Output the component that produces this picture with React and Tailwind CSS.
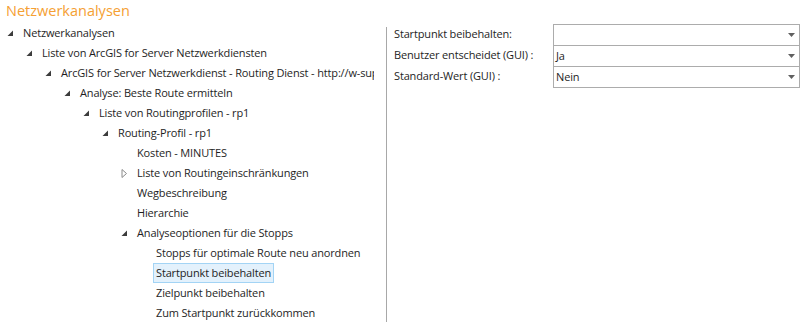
import React from 'react';

const FONT = { fontFamily: '"Open Sans", "Noto Sans", sans-serif' };

const tree = [
    { level: 0, label: 'Netzwerkanalysen', icon: 'open' },
    { level: 1, label: 'Liste von ArcGIS for Server Netzwerkdiensten', icon: 'open' },
    { level: 2, label: 'ArcGIS for Server Netzwerkdienst - Routing Dienst - http://w-sup.example.de/arcgis/rest/services', icon: 'open' },
    { level: 3, label: 'Analyse: Beste Route ermitteln', icon: 'open' },
    { level: 4, label: 'Liste von Routingprofilen - rp1', icon: 'open' },
    { level: 5, label: 'Routing-Profil - rp1', icon: 'open' },
    { level: 6, label: 'Kosten - MINUTES' },
    { level: 6, label: 'Liste von Routingeinschränkungen', icon: 'closed' },
    { level: 6, label: 'Wegbeschreibung' },
    { level: 6, label: 'Hierarchie' },
    { level: 6, label: 'Analyseoptionen für die Stopps', icon: 'open' },
    { level: 7, label: 'Stopps für optimale Route neu anordnen' },
    { level: 7, label: 'Startpunkt beibehalten', selected: true },
    { level: 7, label: 'Zielpunkt beibehalten' },
    { level: 7, label: 'Zum Startpunkt zurückkommen' },
];

// Einrückung pro Ebene: 19px
const indent = ['pl-[4px]', 'pl-[23px]', 'pl-[42px]', 'pl-[61px]', 'pl-[80px]', 'pl-[99px]', 'pl-[118px]', 'pl-[137px]'];

function Arrow({ type }) {
    if (type === 'open') {
        return (
            <svg width="7" height="7" viewBox="0 0 7 7" className="ml-[3px]">
                <polygon points="6,0.5 6,6 0.5,6" fill="#3c3c3c" />
            </svg>
        );
    }
    if (type === 'closed') {
        return (
            <svg width="7" height="9" viewBox="0 0 7 9" className="ml-[3px]">
                <polygon points="1,0.5 5.5,4.5 1,8.5" fill="none" stroke="#8a8a8a" strokeWidth="1" />
            </svg>
        );
    }
    return null;
}

function Dropdown({ value }) {
    return (
        <div className="h-[22px] border border-[#acacac] -mt-px first:mt-0 flex items-center justify-between pl-[2px] pr-[4px] bg-white">
            <span>{value}</span>
            <svg width="7" height="4" viewBox="0 0 7 4">
                <polygon points="0,0 7,0 3.5,4" fill="#606060" />
            </svg>
        </div>
    );
}

export default function App() {
    return (
        <div className="w-[802px] h-[330px] bg-white overflow-hidden text-[#1e1e1e] text-[11px] tracking-[-0.15px]" style={FONT}>
            <div className="h-[23px] pl-[6px] flex items-center text-[14.5px] tracking-normal leading-none text-[#f5a033]">
                Netzwerkanalysen
            </div>
            <div className="flex">
                <div className="w-[374px] overflow-hidden">
                    {tree.map((item, i) => (
                        <div key={i} className={`h-[20px] flex items-center whitespace-nowrap ${indent[item.level]}`}>
                            <span className="w-[19px] shrink-0 flex items-center">
                                <Arrow type={item.icon} />
                            </span>
                            <span
                                className={`leading-[18px] ${item.selected ? 'bg-[#e3f1fc] border border-[#a3d4f5] -ml-[3px] px-[2px] h-[20px]' : ''}`}
                            >
                                {item.label}
                            </span>
                        </div>
                    ))}
                </div>
                <div className="ml-[12px] mt-[4px] w-px h-[295px] bg-[#a8a8a8]" />
                <div className="flex pt-[1px]">
                    <div className="w-[166px] pl-[7px] whitespace-nowrap">
                        <div className="h-[21px] flex items-center">Startpunkt beibehalten:</div>
                        <div className="h-[21px] flex items-center">Benutzer entscheidet (GUI) :</div>
                        <div className="h-[21px] flex items-center">Standard-Wert (GUI) :</div>
                    </div>
                    <div className="w-[247px] flex flex-col">
                        <Dropdown value="" />
                        <Dropdown value="Ja" />
                        <Dropdown value="Nein" />
                    </div>
                </div>
            </div>
        </div>
    );
}
